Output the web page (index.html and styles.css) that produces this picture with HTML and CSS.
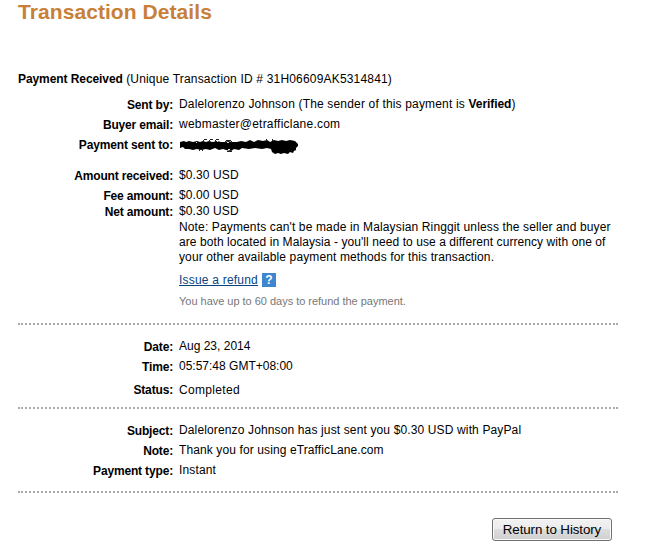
FILE: index.html
```html
<!DOCTYPE html>
<html lang="en">
<head>
<meta charset="utf-8">
<title>Transaction Details</title>
<link rel="stylesheet" href="styles.css">
</head>
<body>
<main class="page">
  <h1 class="title">Transaction Details</h1>
  <p class="summary"><strong>Payment Received</strong> <span class="txn">(Unique Transaction ID # 31H06609AK5314841)</span></p>

  <dl class="group parties">
    <dt>Sent by:</dt><dd><span class="t-sender">Dalelorenzo Johnson (The sender of this payment is <b>Verified</b>)</span></dd>
    <dt>Buyer email:</dt><dd><span class="t-email">webmaster@etrafficlane.com</span></dd>
    <dt>Payment sent to:</dt>
    <dd>
      <svg class="scribble" width="122" height="20" viewBox="0 0 122 20" aria-hidden="true">
        <path d="M1 5L5 4L7 5L10 4L14 5L18 4L21 5L24 4L27 5L30 4L34 5L38 4L42 5L46 5L49 4L53 5L58 5L62 4L67 5L71 3L75 5L79 3L84 4L88 3L91 5L95 3L99 4L103 3L107 4L111 3L116 4L119 7L119 9L117 11L117 13L115 14L114 16L111 15L109 17L105 16L102 17L99 16L96 17L93 15L92 12L88 11L83 12L76 11L70 12L63 11L60 13L55 12L52 14L47 13L44 12L40 13L36 11L31 13L27 12L22 13L18 12L14 13L10 12L6 12L4 10L1 11Z" fill="#000"/>
        <path d="M25 2.500h3M31 2.500h3M37 2.500h3M24.500 3v2M30.500 3v2M36.500 3v2M47 3.500h5M46.500 4v2M52.500 4v2M48 14.500h5M87.500 2v2M93.500 2v2M20.500 12v2M23.500 12v2" stroke="#222" fill="none"/>
        <path d="M26 4.500h1M32 4.500h1M38 4.500h1M48 5.500h2M49 12.500h2M17 5.500h1" stroke="#ddd" fill="none"/>
      </svg>
    </dd>
  </dl>

  <dl class="group amounts">
    <dt>Amount received:</dt><dd><span class="t-money">$0.30 USD</span></dd>
    <dt>Fee amount:</dt><dd><span class="t-money">$0.00 USD</span></dd>
    <dt>Net amount:</dt>
    <dd>
      <span class="t-money">$0.30 USD</span>
      <p class="note"><span class="n1">Note: Payments can't be made in Malaysian Ringgit unless the seller and buyer</span><br><span class="n2">are both located in Malaysia - you'll need to use a different currency with one of</span><br><span class="n3">your other available payment methods for this transaction.</span></p>
      <div class="refund"><a class="link">Issue a refund</a><span class="help">?</span></div>
      <p class="hint">You have up to 60 days to refund the payment.</p>
    </dd>
  </dl>

  <dl class="group divided dates">
    <dt>Date:</dt><dd>Aug 23, 2014</dd>
    <dt>Time:</dt><dd>05:57:48 GMT+08:00</dd>
    <dt class="status">Status:</dt><dd><span class="t-status">Completed</span></dd>
  </dl>

  <dl class="group divided message">
    <dt>Subject:</dt><dd><span class="t-subject">Dalelorenzo Johnson has just sent you $0.30 USD with PayPal</span></dd>
    <dt>Note:</dt><dd><span class="t-thanks">Thank you for using eTrafficLane.com</span></dd>
    <dt>Payment type:</dt><dd><span class="t-type">Instant</span></dd>
  </dl>

  <div class="divided actions"><button class="button">Return to History</button></div>
</main>
</body>
</html>
```
FILE: styles.css
```css
body {
  margin: 0;
  background: #fff;
  color: #000;
  font: 12px/15px "Liberation Sans", Arial, sans-serif;
  white-space: nowrap;
}
.page { width: 600px; padding-left: 18px; }
h1, p, dl, dd { margin: 0; }
.title {
  height: 72px;
  font-size: 21px;
  line-height: 24px;
  letter-spacing: .07px;
  color: #c88039;
}
.summary { height: 25px; }
.summary strong { letter-spacing: -.08px; }
.txn { letter-spacing: .18px; }
.group {
  display: grid;
  grid-template-columns: 155px 1fr;
  column-gap: 6px;
  grid-auto-rows: 20px;
}
dt {
  padding-top: 1px;
  font-weight: bold;
  letter-spacing: -.16px;
  text-align: right;
}
.t-sender { letter-spacing: .17px; }
.t-sender b { letter-spacing: -.06px; }
.t-email { letter-spacing: .23px; }
.t-money { letter-spacing: .12px; }
.n1 { letter-spacing: .136px; }
.n2 { letter-spacing: .075px; }
.n3 { letter-spacing: .12px; }
.t-status { letter-spacing: .33px; }
.t-subject { letter-spacing: .136px; }
.t-thanks { letter-spacing: .11px; }
.t-type { letter-spacing: .15px; }
.parties { height: 71px; }
.amounts { height: 155px; grid-template-rows: 20px 16px 1fr; }
.note { margin-top: 1px; }
.refund { display: flex; gap: 4px; margin-top: 8px; height: 21px; }
.link {
  color: #084482;
  letter-spacing: .21px;
  text-decoration: underline;
}
.help {
  width: 14px;
  height: 14px;
  background: #3f86d0;
  color: #fff;
  font-size: 12px;
  font-weight: bold;
  line-height: 14px;
  text-align: center;
}
.hint { font-size: 11px; letter-spacing: -.02px; color: #777; }
.divided {
  padding-top: 14px;
  border-top: 2px dotted #aaa;
}
.dates { height: 68px; }
.dates .status { padding-top: 4px; }
.dates .status + dd { padding-top: 4px; }
.message { height: 68px; }
.actions {
  display: flex;
  justify-content: flex-end;
  padding: 25px 6px 0 0;
}
.button {
  width: 120px;
  height: 23px;
  padding: 0;
  border: 1px solid #707070;
  border-radius: 3px;
  box-shadow: inset 0 0 0 1px #fafafa;
  background: linear-gradient(#f2f2f2, #ebebeb 50%, #dddddd 50%, #cfcfcf);
  color: #000;
  font: 13.33px/20px "Liberation Sans", Arial, sans-serif;
  letter-spacing: -.1px;
}
.scribble { display: block; }
```
